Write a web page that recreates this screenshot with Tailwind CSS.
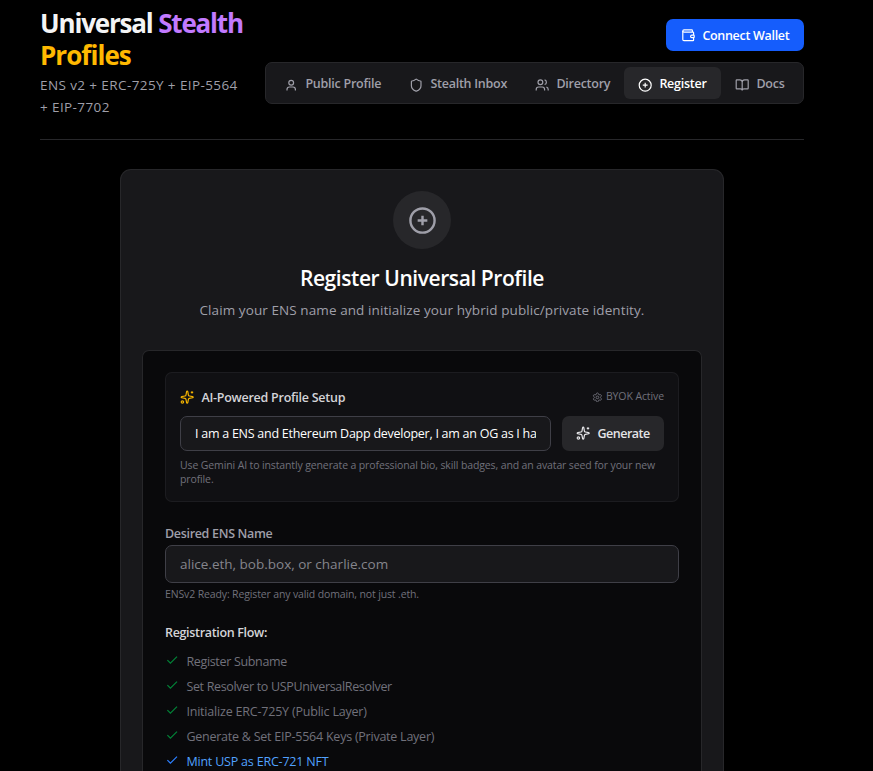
<!DOCTYPE html>
<html lang="en">
  <head>
    <meta charset="UTF-8" />
    <meta name="viewport" content="width=device-width, initial-scale=1.0" />
    <title>Universal Stealth Profiles</title>
    <script src="https://cdn.jsdelivr.net/npm/@tailwindcss/browser@4"></script>
  </head>
  <body class="bg-black text-zinc-100 h-screen overflow-hidden font-['Open_Sans','Noto_Sans',sans-serif]">
    <!-- Icons -->
    <svg class="hidden">
      <symbol id="user" viewBox="0 0 24 24"><circle cx="12" cy="8" r="4" /><path d="M19 21v-2a4 4 0 0 0-4-4H9a4 4 0 0 0-4 4v2" /></symbol>
      <symbol id="shield" viewBox="0 0 24 24"><path d="M20 13c0 5-3.5 7.5-7.66 8.95a1 1 0 0 1-.67-.01C7.5 20.5 4 18 4 13V6a1 1 0 0 1 1-1c2 0 4.5-1.2 6.24-2.72a1.17 1.17 0 0 1 1.52 0C14.51 3.81 17 5 19 5a1 1 0 0 1 1 1z" /></symbol>
      <symbol id="users" viewBox="0 0 24 24"><path d="M16 21v-2a4 4 0 0 0-4-4H6a4 4 0 0 0-4 4v2M22 21v-2a4 4 0 0 0-3-3.87M16 3.13a4 4 0 0 1 0 7.75" /><circle cx="9" cy="7" r="4" /></symbol>
      <symbol id="plus" viewBox="0 0 24 24"><circle cx="12" cy="12" r="10" /><path d="M8 12h8M12 8v8" /></symbol>
      <symbol id="book" viewBox="0 0 24 24"><path d="M12 7v14M3 18a1 1 0 0 1-1-1V4a1 1 0 0 1 1-1h5a4 4 0 0 1 4 4 4 4 0 0 1 4-4h5a1 1 0 0 1 1 1v13a1 1 0 0 1-1 1h-6a3 3 0 0 0-3 3 3 3 0 0 0-3-3z" /></symbol>
      <symbol id="wallet" viewBox="0 0 24 24"><path d="M19 7V4a1 1 0 0 0-1-1H5a2 2 0 0 0 0 4h15a1 1 0 0 1 1 1v4h-3a2 2 0 0 0 0 4h3a1 1 0 0 0 1-1v-2a1 1 0 0 0-1-1" /><path d="M3 5v14a2 2 0 0 0 2 2h15a1 1 0 0 0 1-1v-4" /></symbol>
      <symbol id="sparkles" viewBox="0 0 24 24"><path d="M11.017 2.814a1 1 0 0 1 1.966 0l1.051 5.558a2 2 0 0 0 1.594 1.594l5.558 1.051a1 1 0 0 1 0 1.966l-5.558 1.051a2 2 0 0 0-1.594 1.594l-1.051 5.558a1 1 0 0 1-1.966 0l-1.051-5.558a2 2 0 0 0-1.594-1.594l-5.558-1.051a1 1 0 0 1 0-1.966l5.558-1.051a2 2 0 0 0 1.594-1.594zM20 2v4M22 4h-4" /><circle cx="4" cy="20" r="2" /></symbol>
      <symbol id="settings" viewBox="0 0 24 24"><path d="M9.671 4.136a2.34 2.34 0 0 1 4.659 0 2.34 2.34 0 0 0 3.319 1.915 2.34 2.34 0 0 1 2.33 4.033 2.34 2.34 0 0 0 0 3.831 2.34 2.34 0 0 1-2.33 4.033 2.34 2.34 0 0 0-3.319 1.915 2.34 2.34 0 0 1-4.659 0 2.34 2.34 0 0 0-3.32-1.915 2.34 2.34 0 0 1-2.33-4.033 2.34 2.34 0 0 0 0-3.831A2.34 2.34 0 0 1 6.35 6.051a2.34 2.34 0 0 0 3.319-1.915" /><circle cx="12" cy="12" r="3" /></symbol>
      <symbol id="check" viewBox="0 0 24 24"><path d="M20 6 9 17l-5-5" /></symbol>
    </svg>

    <div class="w-[764px] ml-10">
      <header class="flex justify-between h-[140px] border-b border-zinc-800">
        <div class="w-[207px] pt-[7px]">
          <h1 class="text-[26px] leading-8 font-bold tracking-[-1.18px] whitespace-nowrap">
            Universal <span class="text-purple-400">Stealth</span><br />
            <span class="text-amber-400 tracking-[-0.96px]">Profiles</span>
          </h1>
          <p class="mt-[3px] text-[13.5px] leading-[22px] tracking-[0.4px] text-zinc-400 whitespace-nowrap">ENS v2 + ERC-725Y + EIP-5564<br />+ EIP-7702</p>
        </div>

        <div class="w-[539px] pt-[19px] flex flex-col items-end gap-[11px]">
          <button class="flex items-center gap-[7px] w-[138px] h-8 pl-[15px] rounded-[7px] bg-[#155dfc] text-white text-[12.5px] font-semibold tracking-[-0.3px] whitespace-nowrap">
            <svg class="size-[14.4px] shrink-0 fill-none stroke-current stroke-2"><use href="#wallet" /></svg>
            <span class="pt-0.5">Connect Wallet</span>
          </button>
          <nav class="flex w-[539px] h-[42px] p-1 rounded-[7px] border border-zinc-800 bg-zinc-900 text-zinc-400 text-[12.5px] font-[550] tracking-[-0.25px] whitespace-nowrap">
            <a class="flex items-center gap-[7px] w-[125px] h-8 pt-0.5 pl-[14px]"><svg class="size-[14.4px] mt-0.5 shrink-0 fill-none stroke-current stroke-2"><use href="#user" /></svg>Public Profile</a>
            <a class="flex items-center gap-[7px] w-[126px] h-8 pt-0.5 pl-[14px]"><svg class="size-[14.4px] mt-0.5 shrink-0 fill-none stroke-current stroke-2"><use href="#shield" /></svg>Stealth Inbox</a>
            <a class="flex items-center gap-[7px] w-[103px] h-8 pt-0.5 pl-[14px]"><svg class="size-[14.4px] mt-0.5 shrink-0 fill-none stroke-current stroke-2"><use href="#users" /></svg>Directory</a>
            <a class="flex items-center gap-[7px] w-[97px] h-8 pt-0.5 pl-[14px] rounded-[6px] bg-zinc-800 text-white font-semibold"><svg class="size-[14.4px] mt-0.5 shrink-0 fill-none stroke-current stroke-2"><use href="#plus" /></svg>Register</a>
            <a class="flex items-center gap-[7px] h-8 pt-0.5 pl-[14px]"><svg class="size-[14.4px] mt-0.5 shrink-0 fill-none stroke-current stroke-2"><use href="#book" /></svg>Docs</a>
          </nav>
        </div>
      </header>

      <main class="w-[604px] h-[602px] mt-[29px] ml-20 px-[21px] pt-[21px] rounded-t-[11px] border border-b-0 border-zinc-800 bg-zinc-900">
        <div class="flex flex-col items-center whitespace-nowrap">
          <div class="size-[58px] rounded-full bg-zinc-800 text-zinc-400 flex items-center justify-center">
            <svg class="size-[29px] fill-none stroke-current stroke-2"><use href="#plus" /></svg>
          </div>
          <h2 class="mt-[14px] text-[21px] leading-[30px] font-semibold text-white tracking-[-0.43px]">Register Universal Profile</h2>
          <p class="mt-[6px] text-[13.5px] leading-[22px] tracking-[0.085px] text-zinc-400">Claim your ENS name and initialize your hybrid public/private identity.</p>
        </div>

        <div class="mt-[29px] h-[421px] w-[560px] px-[22px] pt-[21px] rounded-t-[7px] border border-b-0 border-zinc-800 bg-zinc-950">
          <section class="h-[130px] px-[14px] pt-[14px] rounded-[7px] border border-zinc-800/60 bg-zinc-900/50">
            <div class="flex items-center justify-between h-[20px]">
              <h3 class="flex items-center gap-[7px] text-[12.5px] font-semibold tracking-[-0.25px] text-zinc-300 whitespace-nowrap">
                <svg class="size-[14.4px] fill-none stroke-[#f0b100] stroke-2"><use href="#sparkles" /></svg>
                <span class="pt-0.5">AI-Powered Profile Setup</span>
              </h3>
              <span class="flex items-center gap-[3px] text-[10.5px] tracking-[-0.1px] text-zinc-500 whitespace-nowrap">
                <svg class="size-[10.8px] fill-none stroke-current stroke-2"><use href="#settings" /></svg>
                BYOK Active
              </span>
            </div>
            <div class="mt-[9px] flex gap-[11px]">
              <div class="w-[371px] h-[35px] px-[14px] pt-px flex items-center rounded-[7px] border border-zinc-700 bg-zinc-900 text-[12.5px] tracking-[-0.26px] text-white">
                <div class="overflow-hidden whitespace-nowrap">I am a ENS and Ethereum Dapp developer, I am an OG as I have been</div>
              </div>
              <button class="w-[102px] h-[35px] pl-[14px] flex items-center gap-[7px] rounded-[7px] bg-zinc-800 text-zinc-200 text-[12.5px] font-semibold tracking-[-0.48px]">
                <svg class="size-[14.4px] shrink-0 fill-none stroke-current stroke-2"><use href="#sparkles" /></svg>
                <span class="pt-px">Generate</span>
              </button>
            </div>
            <p class="mt-[7px] text-[10.5px] leading-[14px] tracking-[-0.125px] text-zinc-500 whitespace-nowrap">Use Gemini AI to instantly generate a professional bio, skill badges, and an avatar seed for your new<br />profile.</p>
          </section>

          <section class="mt-[23px] whitespace-nowrap">
            <label class="block text-[12.5px] leading-[18px] font-[550] tracking-[-0.32px] text-zinc-400">Desired ENS Name</label>
            <div class="mt-[2px] h-[38px] px-[14px] flex items-center rounded-[7px] border border-zinc-700 bg-zinc-900 text-[13.5px] text-[#85858c]">alice.eth, bob.box, or charlie.com</div>
            <p class="mt-1 text-[10.5px] leading-[14px] tracking-[-0.135px] text-zinc-500">ENSv2 Ready: Register any valid domain, not just .eth.</p>
          </section>

          <section class="mt-[23px] whitespace-nowrap text-[12.5px] leading-[18px] tracking-[-0.33px]">
            <h4 class="font-semibold text-zinc-300">Registration Flow:</h4>
            <ul class="mt-[11px] flex flex-col gap-[7px] text-zinc-500">
              <li class="flex gap-[7px]"><svg class="size-[14.4px] fill-none stroke-green-700 stroke-2"><use href="#check" /></svg>Register Subname</li>
              <li class="flex gap-[7px]"><svg class="size-[14.4px] fill-none stroke-green-700 stroke-2"><use href="#check" /></svg>Set Resolver to USPUniversalResolver</li>
              <li class="flex gap-[7px] tracking-[-0.2px]"><svg class="size-[14.4px] fill-none stroke-green-700 stroke-2"><use href="#check" /></svg>Initialize ERC-725Y (Public Layer)</li>
              <li class="flex gap-[7px] tracking-[-0.24px]"><svg class="size-[14.4px] fill-none stroke-green-700 stroke-2"><use href="#check" /></svg>Generate &amp; Set EIP-5564 Keys (Private Layer)</li>
              <li class="flex gap-[7px] tracking-[-0.2px] text-[#51a2ff] font-medium"><svg class="size-[14.4px] fill-none stroke-[#2b7fff] stroke-2"><use href="#check" /></svg>Mint USP as ERC-721 NFT</li>
            </ul>
          </section>
        </div>
      </main>
    </div>
  </body>
</html>
